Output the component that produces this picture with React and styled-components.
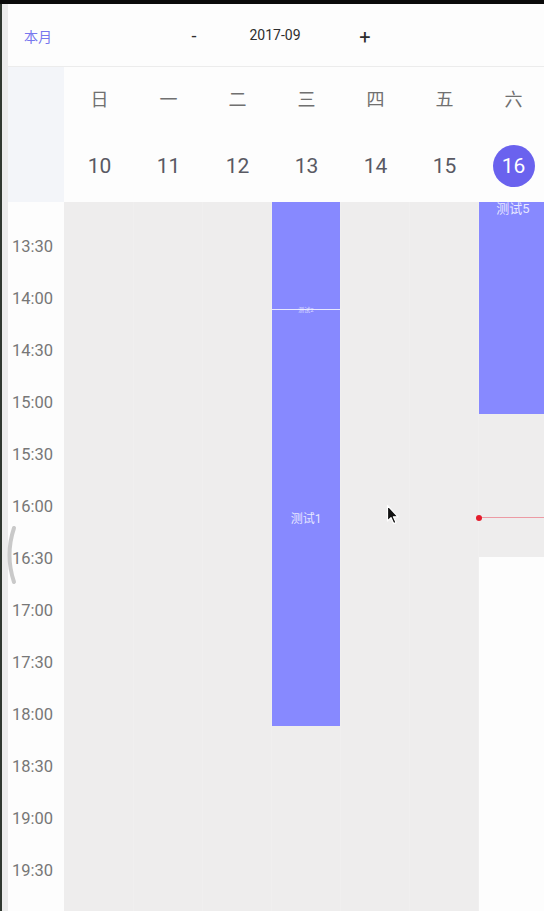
import React from "react";
import styled, { createGlobalStyle } from "styled-components";

const GlobalStyle = createGlobalStyle`
  html, body { margin: 0; padding: 0; background: #ececec; }
  #root { width: 544px; height: 911px; }
  * { box-sizing: border-box; }
`;

const FONT = `Roboto, "Noto Sans CJK SC", "Noto Sans", sans-serif`;
const EVENT = "#8789ff";
const GRAY = "#eeeded";
const PAPER = "#fdfdfd";

const Screen = styled.div`
  position: relative;
  width: 544px;
  height: 911px;
  overflow: hidden;
  border-top: 4px solid #0a0a0a;
  background: linear-gradient(to right, #2f372f 0 2px, #ebebeb 2px 8px, ${PAPER} 8px);
  font-family: ${FONT};
  display: flex;
  flex-direction: column;
`;

const TopBar = styled.header`
  height: 63px;
  margin-left: 8px;
  background: ${PAPER};
  border-bottom: 1px solid #ececec;
  display: flex;
  align-items: center;
  flex-shrink: 0;
`;

const TodayCell = styled.div`
  width: 176px;
  padding-left: 16px;
  font-size: 14px;
  color: #7777ee;
  padding-top: 2px;
`;

const NavCell = styled.div`
  width: ${(p) => p.$w}px;
  text-align: center;
  color: #2e2e2e;
  font-size: ${(p) => p.$size}px;
  font-weight: ${(p) => (p.$bold ? 700 : 400)};
  padding-top: ${(p) => p.$top || 0}px;
`;

const WeekHeader = styled.div`
  display: flex;
  height: 135px;
  flex-shrink: 0;
`;

const Corner = styled.div`
  width: 56px;
  margin-left: 8px;
  background: #f3f5f9;
`;

const DaysGrid = styled.div`
  flex: 1;
  background: ${PAPER};
  display: grid;
  grid-template-columns: 1px repeat(7, 69px);
  grid-template-rows: 60px 75px;
  overflow: hidden;
`;

const Spacer = styled.div``;

const WeekdayLabel = styled.div`
  display: flex;
  align-items: center;
  justify-content: center;
  font-size: 18px;
  color: #707070;
  padding-top: 2px;
`;

const DateCell = styled.div`
  display: flex;
  align-items: center;
  justify-content: center;
  padding-top: 3px;
`;

const DateNum = styled.div`
  width: 42px;
  height: 42px;
  border-radius: 50%;
  display: flex;
  align-items: center;
  justify-content: center;
  font-size: 21px;
  color: ${(p) => (p.$active ? "#ffffff" : "#595963")};
  background: ${(p) => (p.$active ? "#6a62ee" : "transparent")};
`;

const Body = styled.div`
  flex: 1;
  display: flex;
  overflow: hidden;
`;

const TimeCol = styled.div`
  width: 56px;
  margin-left: 8px;
  background: ${PAPER};
  padding-top: 18px;
  display: flex;
  flex-direction: column;
`;

const TimeLabel = styled.div`
  height: 52px;
  flex-shrink: 0;
  display: flex;
  align-items: center;
  padding-left: 4px;
  font-size: 16.5px;
  color: #777777;
`;

const DayGrid = styled.div`
  flex: 1;
  display: grid;
  grid-template-columns: 1px repeat(7, 69px);
  background: ${GRAY};
  overflow: hidden;
`;

const DayColumn = styled.div`
  position: relative;
  background: ${(p) =>
    p.$whiteFrom != null
      ? `linear-gradient(${GRAY} 0 ${p.$whiteFrom}px, ${PAPER} ${p.$whiteFrom}px)`
      : GRAY};
  border-right: 1px solid rgba(255, 255, 255, 0.12);
`;

const Event = styled.div`
  position: absolute;
  left: 0;
  right: 0;
  background: ${EVENT};
  color: rgba(255, 255, 255, 0.82);
  font-size: ${(p) => p.$size || 12}px;
  display: flex;
  justify-content: center;
  align-items: ${(p) => (p.$top ? "flex-start" : "center")};
  overflow: hidden;
`;

const Divider = styled.div`
  position: absolute;
  left: 0;
  right: 0;
  height: 1px;
  background: rgba(255, 255, 255, 0.8);
`;

const SquashedLabel = styled.div`
  position: absolute;
  left: 0;
  right: 0;
  text-align: center;
  font-size: 6px;
  line-height: 6px;
  color: rgba(255, 255, 255, 0.7);
`;

const NowLine = styled.div`
  position: absolute;
  left: 0;
  right: 0;
  height: 1px;
  background: #ec9aa4;
  &::before {
    content: "";
    position: absolute;
    left: -3px;
    top: -2.5px;
    width: 6px;
    height: 6px;
    border-radius: 50%;
    background: #e41c2c;
  }
`;

const Overlay = styled.svg`
  position: absolute;
  left: ${(p) => p.$x}px;
  top: ${(p) => p.$y}px;
  pointer-events: none;
`;

const weekdays = ["日", "一", "二", "三", "四", "五", "六"];
const dates = [10, 11, 12, 13, 14, 15, 16];
const times = [
  "13:30", "14:00", "14:30", "15:00", "15:30", "16:00", "16:30",
  "17:00", "17:30", "18:00", "18:30", "19:00", "19:30",
];

export default function App() {
  return (
    <>
      <GlobalStyle />
      <Screen>
        <TopBar>
          <TodayCell>本月</TodayCell>
          <NavCell $w={20} $size={18}>-</NavCell>
          <NavCell $w={142} $size={14}>2017-09</NavCell>
          <NavCell $w={38} $size={20} $top={4}>+</NavCell>
        </TopBar>

        <WeekHeader>
          <Corner />
          <DaysGrid>
            <Spacer />
            {weekdays.map((w) => (
              <WeekdayLabel key={w}>{w}</WeekdayLabel>
            ))}
            <Spacer />
            {dates.map((d) => (
              <DateCell key={d}>
                <DateNum $active={d === 16}>{d}</DateNum>
              </DateCell>
            ))}
          </DaysGrid>
        </WeekHeader>

        <Body>
          <TimeCol>
            {times.map((t) => (
              <TimeLabel key={t}>{t}</TimeLabel>
            ))}
          </TimeCol>
          <DayGrid>
            <Spacer />
            <DayColumn />
            <DayColumn />
            <DayColumn />
            <DayColumn>
              <Event style={{ top: -60, height: 167 }} />
              <Event style={{ top: 107, height: 417 }}>测试1</Event>
              <Divider style={{ top: 107 }} />
              <SquashedLabel style={{ top: 105 }}>测试2</SquashedLabel>
            </DayColumn>
            <DayColumn />
            <DayColumn />
            <DayColumn $whiteFrom={355}>
              <Event $top $size={13} style={{ top: -4, height: 216 }}>测试5</Event>
              <NowLine style={{ top: 315 }} />
            </DayColumn>
          </DayGrid>
        </Body>

        <Overlay $x={386} $y={500} width="14" height="22" viewBox="0 0 14 22">
          <path
            d="M1.5 1.5 L1.5 17 L5 13.6 L7.6 19.6 L10 18.6 L7.4 12.8 L12 12.8 Z"
            fill="#111"
            stroke="#fff"
            strokeWidth="1.2"
            strokeLinejoin="round"
          />
        </Overlay>
        <Overlay $x={2} $y={520} width="16" height="62" viewBox="0 0 16 62">
          <path
            d="M12 4 Q3 31 12 58"
            fill="none"
            stroke="#c9c9c9"
            strokeWidth="4"
            strokeLinecap="round"
          />
        </Overlay>
      </Screen>
    </>
  );
}
